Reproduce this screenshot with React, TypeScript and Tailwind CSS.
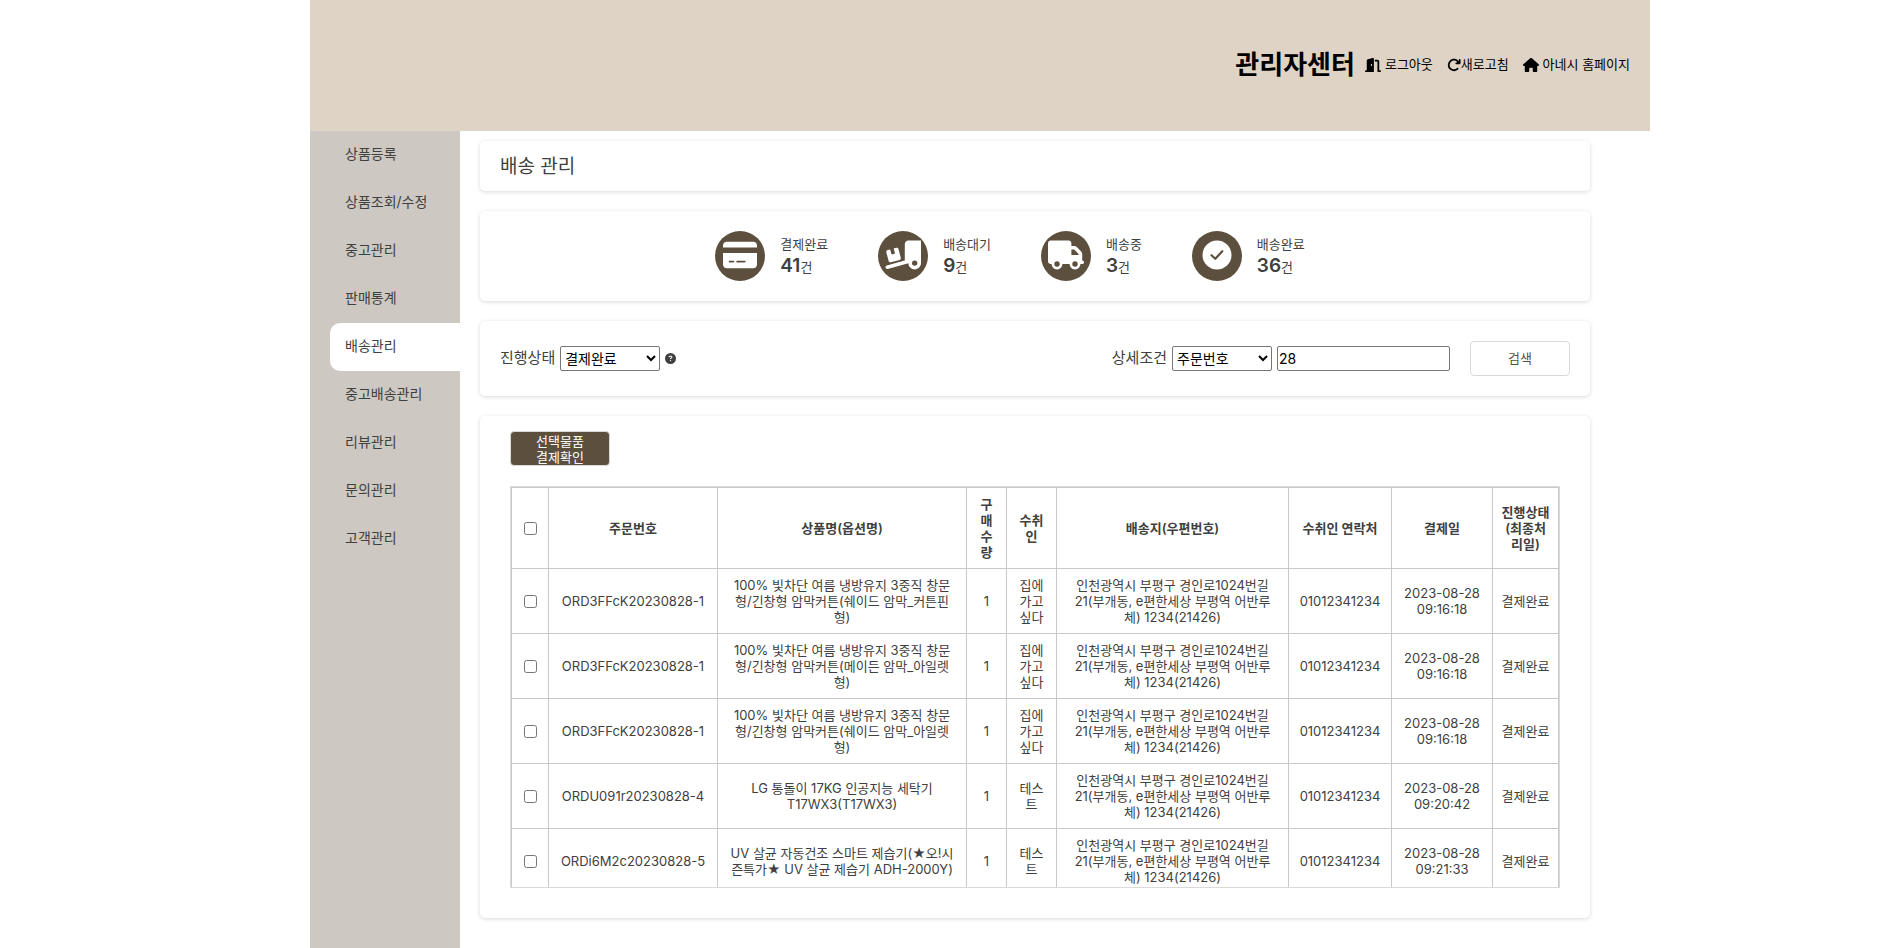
import type { ReactNode } from "react";
import {
  FaArrowRotateRight,
  FaCircleQuestion,
  FaCreditCard,
  FaDoorOpen,
  FaHouse,
  FaTruck,
  FaTruckRampBox,
} from "react-icons/fa6";

const menu = [
  "상품등록",
  "상품조회/수정",
  "중고관리",
  "판매통계",
  "배송관리",
  "중고배송관리",
  "리뷰관리",
  "문의관리",
  "고객관리",
];
const activeMenu = "배송관리";

function DeliveredIcon() {
  return (
    <svg viewBox="0 0 30 30" className="size-[30px]" aria-hidden="true">
      <circle cx="15" cy="15" r="14.5" fill="currentColor" />
      <path
        d="M9.5 15.2l3.8 3.6 7-7.6"
        fill="none"
        stroke="#5c4f3d"
        strokeWidth="2.2"
        strokeLinecap="round"
        strokeLinejoin="round"
      />
    </svg>
  );
}

const stats: { label: string; count: number; icon: ReactNode }[] = [
  { label: "결제완료", count: 41, icon: <FaCreditCard className="size-[34px]" /> },
  { label: "배송대기", count: 9, icon: <FaTruckRampBox className="size-9" /> },
  { label: "배송중", count: 3, icon: <FaTruck className="size-9" /> },
  { label: "배송완료", count: 36, icon: <DeliveredIcon /> },
];

const address = "인천광역시 부평구 경인로1024번길 21(부개동, e편한세상 부평역 어반루체) 1234(21426)";

const orders = [
  {
    id: "ORD3FFcK20230828-1",
    product: "100% 빛차단 여름 냉방유지 3중직 창문형/긴창형 암막커튼(쉐이드 암막_커튼핀형)",
    receiver: "집에가고싶다",
    paid: "2023-08-28 09:16:18",
  },
  {
    id: "ORD3FFcK20230828-1",
    product: "100% 빛차단 여름 냉방유지 3중직 창문형/긴창형 암막커튼(메이든 암막_아일렛형)",
    receiver: "집에가고싶다",
    paid: "2023-08-28 09:16:18",
  },
  {
    id: "ORD3FFcK20230828-1",
    product: "100% 빛차단 여름 냉방유지 3중직 창문형/긴창형 암막커튼(쉐이드 암막_아일렛형)",
    receiver: "집에가고싶다",
    paid: "2023-08-28 09:16:18",
  },
  {
    id: "ORDU091r20230828-4",
    product: "LG 통돌이 17KG 인공지능 세탁기 T17WX3(T17WX3)",
    receiver: "테스트",
    paid: "2023-08-28 09:20:42",
  },
  {
    id: "ORDi6M2c20230828-5",
    product: "UV 살균 자동건조 스마트 제습기(★오!시즌특가★ UV 살균 제습기 ADH-2000Y)",
    receiver: "테스트",
    paid: "2023-08-28 09:21:33",
  },
];

const card = "rounded-[5px] bg-white shadow-[0_1px_4px_rgba(0,0,0,0.15)]";
const field = "h-[25px] rounded-[2px] border border-[#767676] bg-white text-sm text-black";
const headCell = "border border-[#c8c8c8] px-2 font-semibold";
const cell = "border border-[#c8c8c8] px-1 py-2";

export default function App() {
  return (
    <div className="ml-[310px] flex h-screen max-w-[1340px] flex-col overflow-hidden bg-white font-['Inter','Noto_Sans_CJK_KR',sans-serif] text-[#404040]">
      <header className="flex h-[131px] shrink-0 items-center justify-end bg-[#dfd3c5] pr-5 pb-[2px] text-[13px] text-black">
        <h1 className="mr-[10px] text-[26px] font-semibold">관리자센터</h1>
        <nav className="flex items-center gap-[14px]">
          <a href="#logout" className="flex items-center gap-1">
            <FaDoorOpen className="size-4" />
            로그아웃
          </a>
          <a href="#refresh" className="flex items-center">
            <FaArrowRotateRight className="size-[14px]" />
            새로고침
          </a>
          <a href="#home" className="flex items-center gap-1">
            <FaHouse className="size-4" />
            아네시 홈페이지
          </a>
        </nav>
      </header>

      <div className="flex min-h-0 flex-1">
        <nav className="w-[150px] shrink-0 bg-[#cdc8c2] pl-5">
          {menu.map((item) => (
            <a
              key={item}
              href={`#${item}`}
              aria-current={item === activeMenu ? "page" : undefined}
              className={`flex h-12 items-center rounded-l-[10px] pb-[2px] pl-[15px] text-sm ${
                item === activeMenu ? "bg-white" : ""
              }`}
            >
              {item}
            </a>
          ))}
        </nav>

        <main className="flex min-w-0 flex-1 flex-col gap-5 pt-[10px] pr-[60px] pb-[30px] pl-5">
          <section className={`flex h-[50px] shrink-0 items-center px-5 pt-[2px] ${card}`}>
            <h2 className="text-[19px]">배송 관리</h2>
          </section>

          <section className={`flex h-[90px] shrink-0 items-center justify-center ${card}`}>
            {stats.map(({ label, count, icon }) => (
              <div key={label} className="mr-[50px] flex items-center gap-[15px]">
                <div className="flex size-[50px] items-center justify-center rounded-full bg-[#5c4f3d] pb-[2px] text-white">
                  {icon}
                </div>
                <div className="pb-[2px] text-[13px] leading-[22px]">
                  <p>{label}</p>
                  <p>
                    <strong className="text-[19px] leading-[22px] font-semibold">{count}</strong>건
                  </p>
                </div>
              </div>
            ))}
          </section>

          <section className={`flex h-[75px] shrink-0 items-center justify-between px-5 ${card}`}>
            <div className="flex items-center gap-[5px]">
              <label htmlFor="status" className="text-[15px]">
                진행상태
              </label>
              <select id="status" className={`w-[100px] ${field}`}>
                <option>결제완료</option>
                <option>배송대기</option>
                <option>배송중</option>
                <option>배송완료</option>
              </select>
              <FaCircleQuestion className="size-[11px]" />
            </div>
            <form className="flex items-center" onSubmit={(e) => e.preventDefault()}>
              <label htmlFor="condition" className="mr-[5px] text-[15px]">
                상세조건
              </label>
              <select id="condition" className={`mr-[5px] w-[100px] ${field}`}>
                <option>주문번호</option>
                <option>상품명</option>
                <option>수취인</option>
              </select>
              <input
                type="text"
                aria-label="검색어"
                defaultValue="28"
                className={`mr-5 w-[173px] px-px ${field}`}
              />
              <button
                type="submit"
                className="h-[35px] w-[100px] rounded-[4px] border border-[#dadada] bg-white text-[13px] text-[#5c4f3d]"
              >
                검색
              </button>
            </form>
          </section>

          <section className={`flex min-h-0 flex-1 flex-col px-[30px] pt-[15px] pb-[30px] ${card}`}>
            <button
              type="button"
              className="h-[35px] w-[100px] shrink-0 rounded-[4px] border border-[#dadada] bg-[#5c4f3d] text-[13px] leading-4 text-white"
            >
              선택물품
              <br />
              결제확인
            </button>

            <div className="mt-5 min-h-0 flex-1 overflow-hidden border border-[#dadada]">
              <table className="w-full table-fixed border-collapse text-center text-[13px] leading-4">
                <colgroup>
                  <col className="w-[37px]" />
                  <col className="w-[169px]" />
                  <col className="w-[249px]" />
                  <col className="w-10" />
                  <col className="w-[50px]" />
                  <col />
                  <col className="w-[103px]" />
                  <col className="w-[101px]" />
                  <col className="w-[66px]" />
                </colgroup>
                <thead>
                  <tr className="h-[81px]">
                    <th className={headCell}>
                      <input type="checkbox" aria-label="전체 선택" className="mx-auto block size-[13px]" />
                    </th>
                    <th className={headCell}>주문번호</th>
                    <th className={headCell}>상품명(옵션명)</th>
                    <th className={headCell}>구매수량</th>
                    <th className={headCell}>수취인</th>
                    <th className={headCell}>배송지(우편번호)</th>
                    <th className={headCell}>수취인 연락처</th>
                    <th className={headCell}>결제일</th>
                    <th className={headCell}>진행상태 (최종처리일)</th>
                  </tr>
                </thead>
                <tbody>
                  {orders.map((order, i) => (
                    <tr key={i} className="h-[65px]">
                      <td className={cell}>
                        <input
                          type="checkbox"
                          aria-label={`${order.id} 선택`}
                          className="mx-auto block size-[13px]"
                        />
                      </td>
                      <td className={cell}>{order.id}</td>
                      <td className="border border-[#c8c8c8] px-[11px] py-2">{order.product}</td>
                      <td className={cell}>1</td>
                      <td className="border border-[#c8c8c8] px-2 py-2">{order.receiver}</td>
                      <td className="border border-[#c8c8c8] px-[14px] py-2">{address}</td>
                      <td className={cell}>01012341234</td>
                      <td className="border border-[#c8c8c8] px-2 py-2">{order.paid}</td>
                      <td className={cell}>결제완료</td>
                    </tr>
                  ))}
                </tbody>
              </table>
            </div>
          </section>
        </main>
      </div>
    </div>
  );
}
